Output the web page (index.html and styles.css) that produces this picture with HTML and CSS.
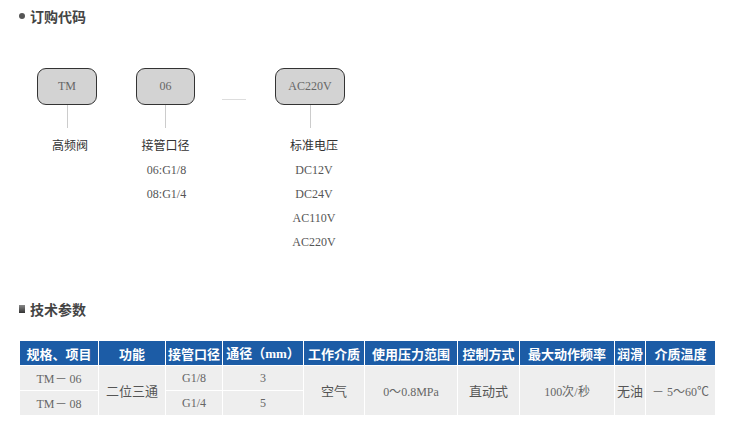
FILE: index.html
```html
<!DOCTYPE html>
<html lang="zh-CN">
<head>
<meta charset="utf-8">
<title>订购代码</title>
<link rel="stylesheet" href="styles.css">
</head>
<body>
<div class="page">
  <h2 class="heading"><span class="dot"></span>订购代码</h2>

  <div class="code">
    <div class="node n1">
      <div class="box">TM</div>
      <div class="stem"></div>
      <div class="label">高频阀</div>
    </div>
    <div class="node n2">
      <div class="box">06</div>
      <div class="stem"></div>
      <div class="label">接管口径</div>
      <div class="val">06:G1/8</div>
      <div class="val">08:G1/4</div>
    </div>
    <div class="dash"></div>
    <div class="node n3">
      <div class="box">AC220V</div>
      <div class="stem"></div>
      <div class="label">标准电压</div>
      <div class="val">DC12V</div>
      <div class="val">DC24V</div>
      <div class="val">AC110V</div>
      <div class="val">AC220V</div>
    </div>
  </div>

  <h2 class="heading h2"><span class="sq"></span>技术参数</h2>

  <table class="spec">
    <colgroup>
      <col class="c1"><col class="c2"><col class="c3"><col class="c4"><col class="c5">
      <col class="c6"><col class="c7"><col class="c8"><col class="c9"><col class="c10">
    </colgroup>
    <thead>
      <tr>
        <th>规格、项目</th><th>功能</th><th>接管口径</th><th>通径（<span class="mm">mm</span>）</th><th>工作介质</th>
        <th>使用压力范围</th><th>控制方式</th><th>最大动作频率</th><th>润滑</th><th>介质温度</th>
      </tr>
    </thead>
    <tbody>
      <tr>
        <td class="num">TM－ 06</td>
        <td rowspan="2" class="zh">二位三通</td>
        <td class="num">G1/8</td>
        <td class="num">3</td>
        <td rowspan="2" class="zh">空气</td>
        <td rowspan="2" class="num">0～0.8MPa</td>
        <td rowspan="2" class="zh">直动式</td>
        <td rowspan="2" class="num">100次/秒</td>
        <td rowspan="2" class="zh">无油</td>
        <td rowspan="2" class="num">－ 5～60℃</td>
      </tr>
      <tr>
        <td class="num">TM－ 08</td>
        <td class="num">G1/4</td>
        <td class="num">5</td>
      </tr>
    </tbody>
  </table>
</div>
</body>
</html>
```

FILE: styles.css
```css
html, body {
  margin: 0;
  padding: 0;
  background: #fff;
}
body {
  font-family: "Noto Sans CJK SC", "Liberation Sans", sans-serif;
  color: #444;
}
.page {
  padding: 6px 0 0 19px;
}
.heading {
  margin: 0;
  display: flex;
  align-items: center;
  font-size: 14px;
  line-height: 20px;
  height: 20px;
  font-weight: bold;
  color: #444;
}
.dot {
  width: 6px;
  height: 6px;
  border-radius: 50%;
  background: #555;
  margin-right: 5px;
}
.sq {
  width: 6px;
  height: 8px;
  background: linear-gradient(#888, #333);
  margin-right: 5px;
}
.h2 {
  margin-top: 45px;
}
.code {
  display: flex;
  align-items: flex-start;
  margin-top: 42px;
  padding-left: 18px;
}
.node {
  display: flex;
  flex-direction: column;
  align-items: center;
}
.box {
  box-sizing: border-box;
  height: 37px;
  border: 1px solid #333;
  border-radius: 9px;
  background: #d3d3d3;
  font-family: "Liberation Serif", serif;
  font-size: 12px;
  color: #666;
  display: flex;
  align-items: center;
  justify-content: center;
}
.n1 .box { width: 60px; }
.n2 { margin-left: 39px; }
.n2 .box { width: 59px; }
.n3 .box { width: 70px; }
.dash {
  width: 24px;
  height: 1px;
  background: #ddd;
  margin: 31px 29px 0 27px;
}
.stem {
  width: 1px;
  height: 23px;
  background: #ccc;
  margin-bottom: 5px;
}
.label {
  font-size: 12px;
  line-height: 24px;
  color: #333;
  white-space: nowrap;
}
.val {
  font-family: "Liberation Serif", serif;
  font-size: 12px;
  line-height: 24px;
  color: #555;
  white-space: nowrap;
}
.n1 .label { padding-left: 6px; }
.n2 .val { padding-left: 2px; }
.n3 .label, .n3 .val { padding-left: 8px; }
.n2 .label + .val, .n3 .label + .val { margin-top: 1px; }

.spec {
  margin-top: 21px;
  border-collapse: collapse;
  table-layout: fixed;
  width: 696px;
}
.spec th, .spec td {
  border: 1px solid #fff;
  padding: 0;
  text-align: center;
  white-space: nowrap;
  overflow: hidden;
}
.spec th {
  background: #1c5ca6;
  color: #fff;
  font-size: 13px;
  font-weight: bold;
  height: 23px;
  line-height: 23px;
}
.spec .mm {
  font-family: "Liberation Serif", serif;
}
.spec td {
  background: #eeeeee;
  color: #666;
  height: 24px;
}
.spec td.num {
  font-family: "Liberation Serif", serif;
  font-size: 12px;
}
.spec td.zh {
  font-size: 13px;
  color: #555;
}
.c1 { width: 79px; }
.c2 { width: 67px; }
.c3 { width: 57px; }
.c4 { width: 81px; }
.c5 { width: 61px; }
.c6 { width: 93px; }
.c7 { width: 62px; }
.c8 { width: 95px; }
.c9 { width: 31px; }
.c10 { width: 70px; }
```
